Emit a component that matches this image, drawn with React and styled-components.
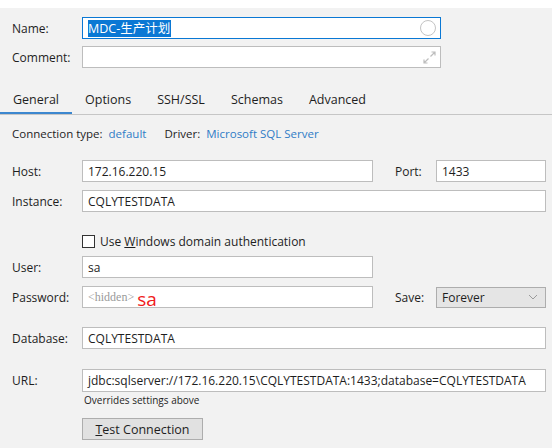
import React from "react";
import styled, { createGlobalStyle } from "styled-components";

const GlobalStyle = createGlobalStyle`
	html, body {
		margin: 0;
		padding: 0;
		background: #f2f2f2;
	}
	body {
		font-family: "Open Sans", "Noto Sans CJK SC", sans-serif;
		font-size: 12px;
		color: #1e1e1e;
	}
`;

function App() {
	return (
		<Page>
			<GlobalStyle />
			<TopStrip />
			<Header>
				<Row>
					<Label>Name:</Label>
					<Field $focused $width={359}>
						<Selected>MDC-生产计划</Selected>
						<RoundIcon />
					</Field>
				</Row>
				<Row $top={7}>
					<Label>Comment:</Label>
					<Field $width={359}>
						<ExpandIcon width="13" height="13" viewBox="0 0 13 13">
							<path d="M7.5 5.5 L12 1 M8.5 1 H12 V4.5" fill="none" stroke="#bdbdbd" strokeWidth="1.2" />
							<path d="M5.5 7.5 L1 12 M1 8.5 V12 H4.5" fill="none" stroke="#bdbdbd" strokeWidth="1.2" />
						</ExpandIcon>
					</Field>
				</Row>
			</Header>

			<Tabs>
				<Tab $active>General</Tab>
				<Tab>Options</Tab>
				<Tab>SSH/SSL</Tab>
				<Tab>Schemas</Tab>
				<Tab>Advanced</Tab>
			</Tabs>

			<Body>
				<InfoLine>
					<span>Connection type:</span>
					<LinkText>default</LinkText>
					<span>Driver:</span>
					<LinkText>Microsoft SQL Server</LinkText>
				</InfoLine>

				<Row $top={19}>
					<Label>Host:</Label>
					<Field $width={291}>172.16.220.15</Field>
					<SideLabel>Port:</SideLabel>
					<Field $width={110}>1433</Field>
				</Row>
				<Row $top={8}>
					<Label>Instance:</Label>
					<Field $grow>CQLYTESTDATA</Field>
				</Row>

				<CheckRow>
					<Box />
					<span>
						Use <u>W</u>indows domain authentication
					</span>
				</CheckRow>

				<Row $top={7}>
					<Label>User:</Label>
					<Field $width={291}>sa</Field>
				</Row>
				<Row $top={8}>
					<Label>Password:</Label>
					<Field $width={291} $visible>
						<Hidden>&lt;hidden&gt;</Hidden>
						<RedNote>sa</RedNote>
					</Field>
					<SideLabel>Save:</SideLabel>
					<Combo>
						Forever
						<svg width="10" height="6" viewBox="0 0 10 6">
							<path d="M1 1 L5 5 L9 1" fill="none" stroke="#9a9a9a" strokeWidth="1" />
						</svg>
					</Combo>
				</Row>

				<Row $top={19}>
					<Label>Database:</Label>
					<Field $grow>CQLYTESTDATA</Field>
				</Row>

				<Row $top={20}>
					<Label>URL:</Label>
					<Field $grow $tall>
						jdbc:sqlserver://172.16.220.15\CQLYTESTDATA:1433;database=CQLYTESTDATA
					</Field>
				</Row>
				<Hint>Overrides settings above</Hint>
				<Button>
					<u>T</u>est Connection
				</Button>
			</Body>
		</Page>
	);
}

const Page = styled.div`
	width: 552px;
	height: 448px;
	overflow: hidden;
	background: #f2f2f2;
`;

const TopStrip = styled.div`
	height: 8px;
	background: #ffffff;
`;

const Header = styled.div`
	padding: 9px 0 0 12px;
`;

const Row = styled.div`
	display: flex;
	align-items: center;
	margin-top: ${(p) => p.$top || 0}px;
	padding-right: 6px;
`;

const Label = styled.div`
	width: 70px;
	flex-shrink: 0;
`;

const SideLabel = styled.div`
	width: 41px;
	margin-left: 22px;
	flex-shrink: 0;
`;

const Field = styled.div`
	position: relative;
	box-sizing: border-box;
	height: ${(p) => (p.$tall ? 23 : 22)}px;
	${(p) => (p.$grow ? "flex: 1;" : `width: ${p.$width}px;`)}
	border: 1px solid ${(p) => (p.$focused ? "#0a78d4" : "#bdbdbd")};
	background: #ffffff;
	display: flex;
	align-items: center;
	padding-left: 5px;
	white-space: nowrap;
	overflow: ${(p) => (p.$visible ? "visible" : "hidden")};
`;

const Selected = styled.span`
	background: #0a78d4;
	color: #ffffff;
	font-size: 12.5px;
	line-height: 17px;
	padding: 0 1px 0 0;
`;

const RoundIcon = styled.span`
	position: absolute;
	right: 4px;
	top: 2px;
	width: 14px;
	height: 14px;
	border: 1px solid #c4c4c4;
	border-radius: 50%;
`;

const ExpandIcon = styled.svg`
	position: absolute;
	right: 4px;
	top: 4px;
`;

const Tabs = styled.div`
	display: flex;
	margin-top: 18px;
	height: 28px;
	border-bottom: 1px solid #c6c6c6;
`;

const Tab = styled.div`
	box-sizing: border-box;
	padding: 0 13px;
	display: flex;
	align-items: center;
	height: 28px;
	font-size: 12.5px;
	border-bottom: 2px solid ${(p) => (p.$active ? "#3c87cf" : "transparent")};
`;

const Body = styled.div`
	padding: 11px 0 0 12px;
`;

const InfoLine = styled.div`
	display: flex;
	gap: 6px;
	font-size: 11.5px;
	& > span:nth-child(3) { margin-left: 12px; }
`;

const LinkText = styled.span`
	color: #2f7cc6;
`;

const CheckRow = styled.div`
	display: flex;
	align-items: center;
	gap: 5px;
	margin: 21px 0 0 70px;
	height: 16px;
`;

const Box = styled.span`
	box-sizing: border-box;
	width: 13px;
	height: 13px;
	border: 1px solid #333333;
	background: #ffffff;
`;

const Hidden = styled.span`
	font-family: "Liberation Serif", "DejaVu Serif", serif;
	color: #9a9a9a;
	font-size: 12px;
`;

const RedNote = styled.span`
	display: inline-block;
	color: #f01c1c;
	font-size: 19px;
	line-height: 20px;
	margin-left: 3px;
	margin-top: 3px;
`;

const Combo = styled.div`
	box-sizing: border-box;
	flex: 1;
	height: 21px;
	border: 1px solid #adadad;
	background: #e5e5e5;
	display: flex;
	align-items: center;
	justify-content: space-between;
	padding: 0 7px 0 5px;
`;

const Hint = styled.div`
	font-size: 10px;
	margin: 1px 0 0 72px;
`;

const Button = styled.button`
	margin: 11px 0 0 70px;
	width: 121px;
	height: 22px;
	border: 1px solid #adadad;
	background: #e1e1e1;
	font: inherit;
	font-size: 12.5px;
	color: #1e1e1e;
	padding: 0;
`;

export default App;
